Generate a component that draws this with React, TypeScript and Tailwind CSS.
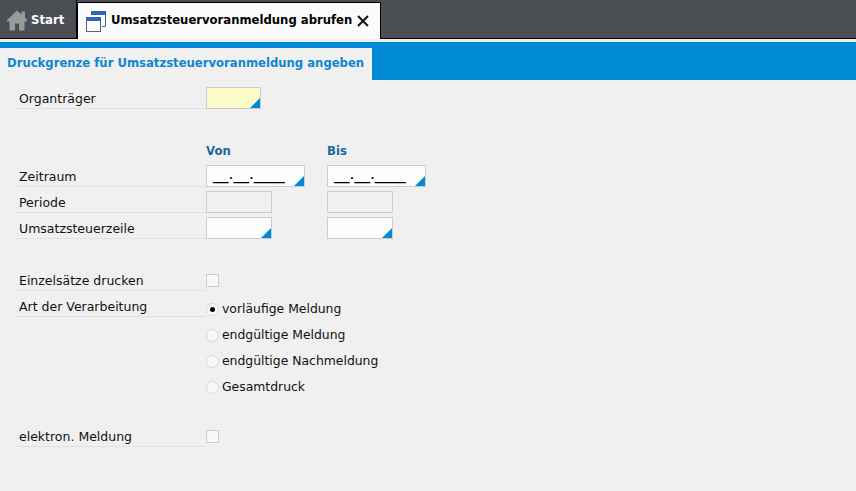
function Corner() {
  return (
    <span className="absolute right-0 bottom-0 w-0 h-0 border-l-[10px] border-l-transparent border-b-[10px] border-b-[#0089d4]" />
  );
}

function Field({ className, corner, children }: { className: string; corner?: boolean; children?: React.ReactNode }) {
  return (
    <div className={`relative h-[22px] border border-[#cdcdcd] ${className}`}>
      {children}
      {corner && <Corner />}
    </div>
  );
}

function DateField() {
  return (
    <Field className="w-[99px] bg-[#fdfdfd]" corner>
      <span className="absolute left-[6px] top-[-1px] text-[15.5px] leading-[18px] text-black">__.__.____</span>
    </Field>
  );
}

function Row({ label, children, className }: { label: string; children?: React.ReactNode; className?: string }) {
  return (
    <div className={`flex h-[22px] ${className ?? ""}`}>
      <div className="w-[192px] h-[22px] pl-[5px] border-b border-[#e2e2e2] text-[12.5px] leading-[24px] text-[#111]">{label}</div>
      {children}
    </div>
  );
}

function Check() {
  return <div className="mt-[5px] w-[13px] h-[13px] border border-[#cdcdcd] bg-[#f8f8f8]" />;
}

function Radio({ label, checked }: { label: string; checked?: boolean }) {
  return (
    <div className="flex items-center h-[26px] text-[12.4px] text-[#111]">
      <span className="flex items-center justify-center w-[13px] h-[13px] rounded-full border border-[#d8d8d8] bg-[#f8f8f8]">
        {checked && <span className="w-[5px] h-[5px] rounded-full bg-black" />}
      </span>
      <span className="ml-[3px]">{label}</span>
    </div>
  );
}

export default function App() {
  return (
    <div className="w-[856px] h-[491px] overflow-hidden bg-[#f0f0f0] font-['DejaVu_Sans',Verdana,sans-serif]">
      <div className="flex h-[39px] bg-[#4b4e53] border-b border-black">
        <div className="flex items-center w-[77px] pt-[3px] pl-[7px] border-r border-black">
          <svg width="20" height="21" viewBox="0 0 20 20">
            <path d="M10 0 L14.5 4 V1 H18 V7.3 L20 9.5 V11 H17.5 V20 H12 V13 H8 V20 H2.5 V11 H0 V9.5 Z" fill="#9a9a9a" />
          </svg>
          <span className="ml-[4px] text-[11.7px] font-bold text-white">Start</span>
        </div>
        <div className="flex items-center w-[304px] h-[37px] mt-[2px] pl-[8px] bg-[#fbfbfb] border border-b-0 border-black rounded-tl-[2px]">
          <svg width="20" height="21" viewBox="0 0 20 21" className="shrink-0">
            <path d="M5 .5 H19.5 V15.5 H16" fill="none" stroke="#2a6ab0" />
            <rect x="5" y="0" width="15" height="4" fill="#2a6ab0" />
            <rect x=".5" y="6.5" width="14" height="14" fill="#fbfbfb" stroke="#5f6368" />
            <rect x="0" y="6" width="15" height="4" fill="#2a6ab0" />
          </svg>
          <span className="ml-[5px] w-[246px] text-[11.65px] font-bold text-black whitespace-nowrap">Umsatzsteuervoranmeldung abrufen</span>
          <svg width="12" height="12" viewBox="0 0 12 12">
            <path d="M1 1 L11 11 M11 1 L1 11" stroke="#111" strokeWidth="2" />
          </svg>
        </div>
      </div>
      <div className="h-[3px]" />
      <div className="flex h-[38px] bg-[#0089d4] pt-[6px]">
        <div className="w-[372px] h-[32px] pl-[7px] bg-[#f0f0f0] text-[11.65px] font-bold leading-[30px] text-[#0f86cf] whitespace-nowrap">
          Druckgrenze für Umsatzsteuervoranmeldung angeben
        </div>
      </div>

      <div className="pl-[14px] pt-[7px]">
        <Row label="Organträger">
          <Field className="w-[55px] bg-[#fbfbcb]" corner />
        </Row>

        <div className="flex mt-[33px] h-[23px] pl-[192px] pt-[1px] text-[11.7px] font-bold text-[#17689f]">
          <div className="w-[121px]">Von</div>
          <div>Bis</div>
        </div>

        <Row label="Zeitraum">
          <DateField />
          <div className="w-[22px]" />
          <DateField />
        </Row>
        <Row label="Periode" className="mt-[4px]">
          <Field className="w-[66px]" />
          <div className="w-[55px]" />
          <Field className="w-[66px]" />
        </Row>
        <Row label="Umsatzsteuerzeile" className="mt-[4px]">
          <Field className="w-[66px] bg-[#fdfdfd]" corner />
          <div className="w-[55px]" />
          <Field className="w-[66px] bg-[#fdfdfd]" corner />
        </Row>

        <Row label="Einzelsätze drucken" className="mt-[30px]">
          <Check />
        </Row>
        <div className="flex mt-[4px]">
          <div className="w-[192px] h-[22px] pl-[5px] border-b border-[#e2e2e2] text-[12.5px] leading-[24px] text-[#111]">Art der Verarbeitung</div>
          <div className="pt-[1px]">
            <Radio label="vorläufige Meldung" checked />
            <Radio label="endgültige Meldung" />
            <Radio label="endgültige Nachmeldung" />
            <Radio label="Gesamtdruck" />
          </div>
        </div>
        <Row label="elektron. Meldung" className="mt-[25px]">
          <Check />
        </Row>
      </div>
    </div>
  );
}
